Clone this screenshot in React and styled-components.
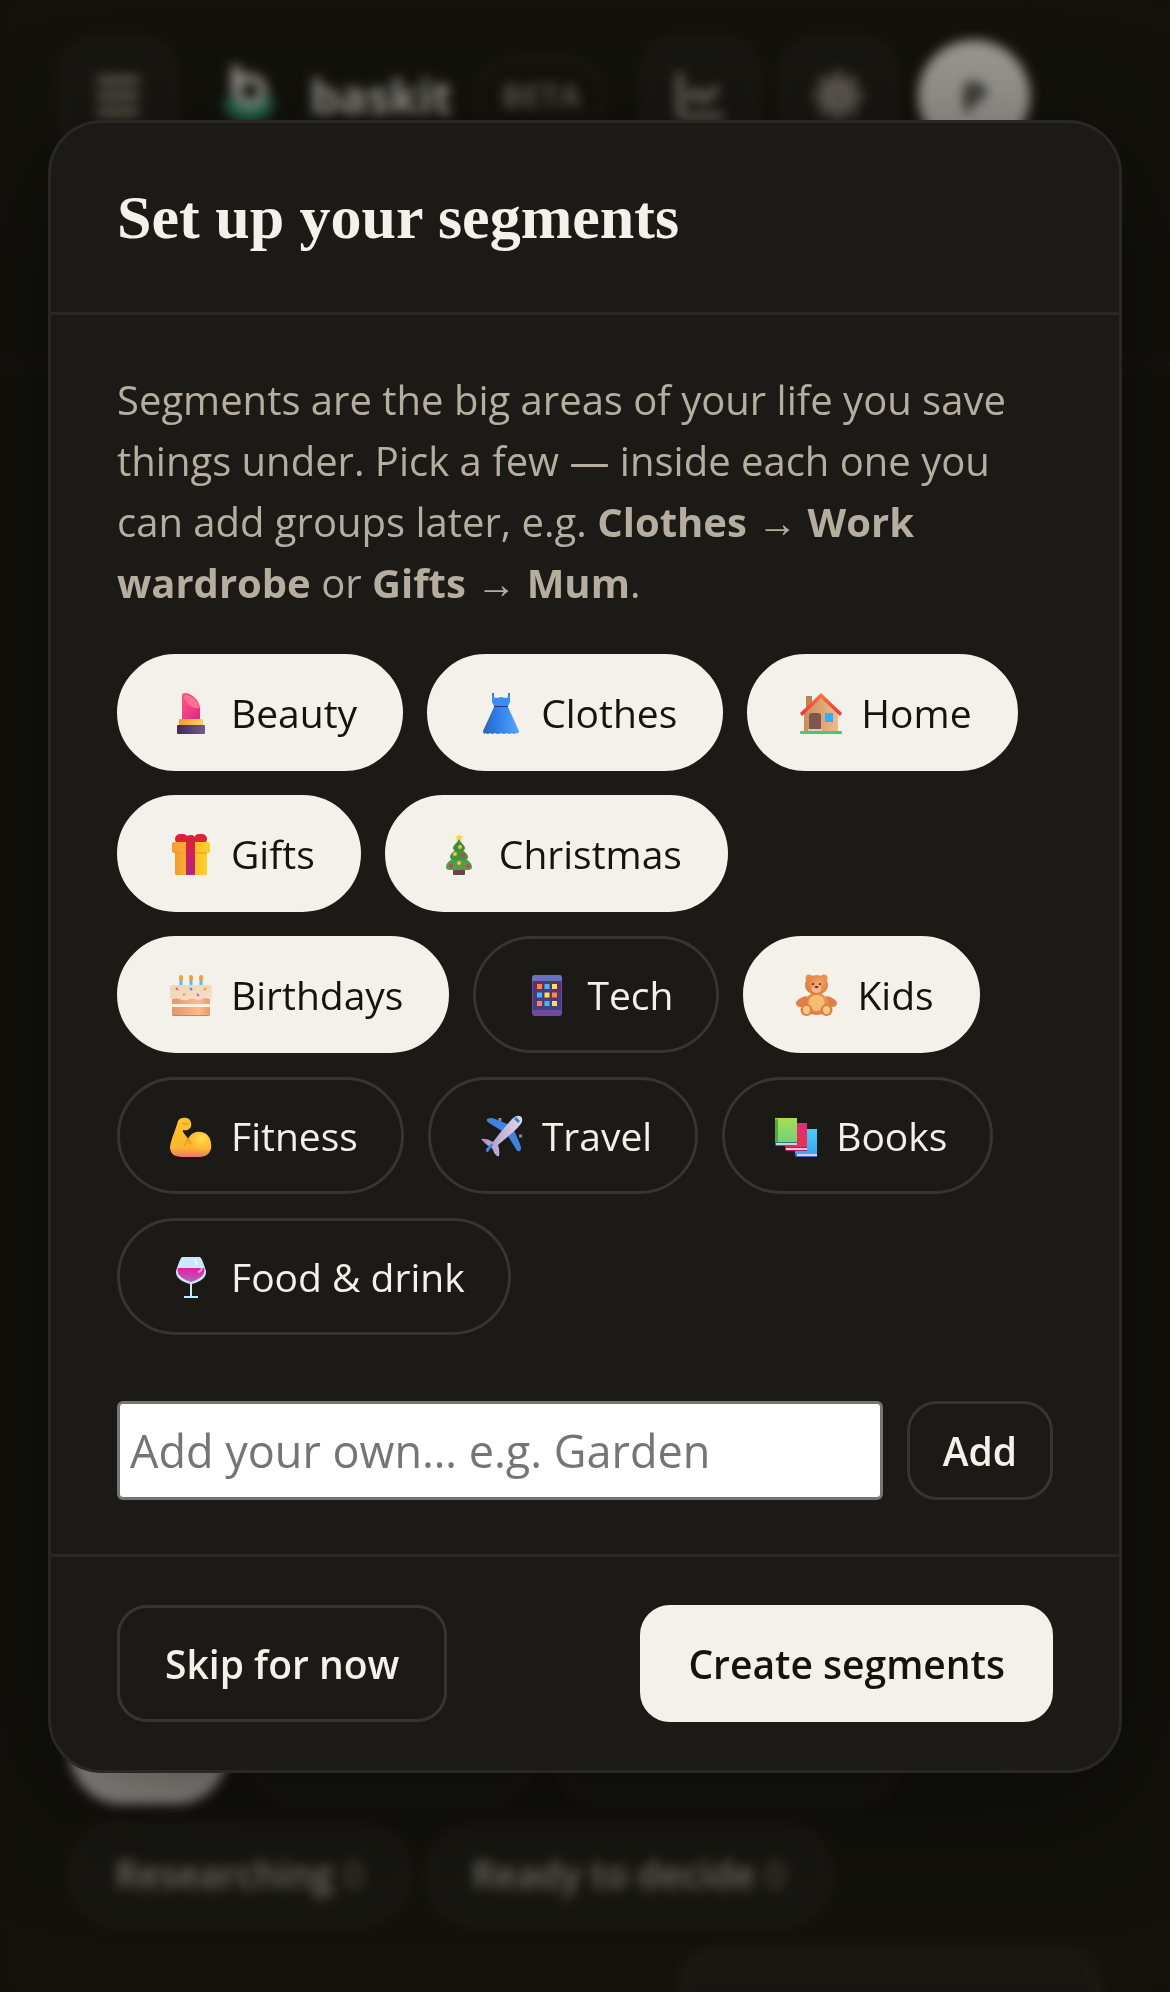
import React, { useState } from "react";
import styled, { createGlobalStyle } from "styled-components";
import { Menu, ChartLine, Sun } from "lucide-react";

const Lipstick = () => (
  <>
    <defs>
      <linearGradient id="lip" x1="0" y1="0" x2="1" y2="1">
        <stop offset="0" stopColor="#ff5a7d" />
        <stop offset="1" stopColor="#dd2590" />
      </linearGradient>
      <linearGradient id="lipBase">
        <stop offset="0" stopColor="#3c2a55" />
        <stop offset="1" stopColor="#75598f" />
      </linearGradient>
      <linearGradient id="lipGold">
        <stop offset="0" stopColor="#f59a35" />
        <stop offset="1" stopColor="#ffd257" />
      </linearGradient>
    </defs>
    <path d="M13 28V3q0-2 3-2c6 0 15 7 15 16v11z" fill="url(#lip)" />
    <path d="M15 3c7-1 15 6 15 13-7 2-15-6-15-13z" fill="#ff6f93" />
    <rect x="10" y="27" width="24" height="7" rx="1" fill="url(#lipGold)" />
    <rect x="8" y="33" width="28" height="9" rx="1" fill="url(#lipBase)" />
  </>
);

const Dress = () => (
  <>
    <defs>
      <linearGradient id="dress">
        <stop offset="0" stopColor="#2d63b4" />
        <stop offset="0.4" stopColor="#2f7fe6" />
        <stop offset="1" stopColor="#5aa2ff" />
      </linearGradient>
    </defs>
    <path d="M14 1v4M30 1v4" stroke="#3a7fd0" strokeWidth="2" />
    <path d="M13 4q2 0 3 2 3 0 6-1 3 1 6 1 1-2 3-2v6l-2 4H15l-2-4z" fill="#3a8cf8" />
    <path
      d="M15 15h14l11 24q0 3-3 2-2 2-4 0-3 2-5 0-3 2-6 0-3 2-6 0-3 2-5 0-3 2-4 0-3 2-3-2z"
      fill="url(#dress)"
    />
    <rect x="15" y="14" width="14" height="1" fill="#39306b" />
  </>
);

const House = () => (
  <>
    <defs>
      <linearGradient id="wall">
        <stop offset="0" stopColor="#c98e5d" />
        <stop offset="1" stopColor="#efbb8c" />
      </linearGradient>
      <linearGradient id="roof" x1="0" y1="0" x2="0" y2="1">
        <stop offset="0" stopColor="#ff7a3c" />
        <stop offset="1" stopColor="#e0353c" />
      </linearGradient>
    </defs>
    <rect x="7" y="4" width="6" height="13" fill="#b9854f" />
    <path d="M5 21 22 5l17 16v18H5z" fill="url(#wall)" />
    <path d="M1 21 22 1l21 20-2 3L22 6 3 24z" fill="url(#roof)" />
    <path d="M10 37V24q0-3 3-3h6q3 0 3 3v13z" fill="#80564f" />
    <rect x="9" y="37" width="14" height="2" fill="#d3cdd2" />
    <rect x="26" y="21" width="8" height="9" fill="#35acf5" />
    <rect x="1" y="39" width="42" height="3" rx="1" fill="#3fcb77" />
  </>
);

const Gift = () => (
  <>
    <defs>
      <linearGradient id="box">
        <stop offset="0" stopColor="#f69a35" />
        <stop offset="1" stopColor="#fbd326" />
      </linearGradient>
      <linearGradient id="ribbon" x1="0" y1="0" x2="0" y2="1">
        <stop offset="0" stopColor="#e01f38" />
        <stop offset="1" stopColor="#b3257f" />
      </linearGradient>
    </defs>
    <rect x="6" y="1" width="13" height="10" rx="5" fill="#de2236" />
    <rect x="25" y="1" width="13" height="10" rx="5" fill="#de2236" />
    <rect x="6" y="19" width="32" height="23" rx="1" fill="url(#box)" />
    <rect x="3" y="9" width="38" height="11" rx="2" fill="url(#box)" />
    <path d="M6 20h32" stroke="#e29a28" />
    <path d="M17 42V6q0-4 5-4 4 0 4 4v36z" fill="url(#ribbon)" />
  </>
);

const Tree = () => (
  <>
    <rect x="16" y="36" width="12" height="6" rx="1" fill="#6c4347" />
    <path d="M22 20c5 6 13 8 13 14q0 3-4 3H13q-4 0-4-3c0-6 8-8 13-14z" fill="#4f9e48" />
    <path d="M22 12c3 6 9 8 9 12 0 2-2 3-4 3H17c-2 0-4-1-4-3 0-4 6-6 9-12z" fill="#429540" />
    <path d="M22 5c1 5 6 7 6 10 0 2-2 3-3 3h-6c-1 0-3-1-3-3 0-3 5-5 6-10z" fill="#3a9038" />
    <path d="m22 1 1 2h3l-2 2 1 3-3-2-3 2 1-3-2-2h3z" fill="#ffcf3d" />
    <g fill="#f5c245">
      <circle cx="23" cy="14" r="2" />
      <circle cx="18" cy="21" r="2" />
      <circle cx="22" cy="30" r="2" />
    </g>
    <g fill="#d9365f">
      <circle cx="26" cy="22" r="2" />
      <circle cx="14" cy="33" r="2" />
      <circle cx="31" cy="33" r="2" />
    </g>
  </>
);

const Cake = () => (
  <>
    <defs>
      <linearGradient id="sponge">
        <stop offset="0" stopColor="#e1966d" />
        <stop offset="0.7" stopColor="#ffba86" />
        <stop offset="1" stopColor="#e89c70" />
      </linearGradient>
      <linearGradient id="icing" x1="0" y1="0" x2="1" y2="1">
        <stop offset="0" stopColor="#efd6ac" />
        <stop offset="1" stopColor="#f5ddd0" />
      </linearGradient>
    </defs>
    <rect x="3" y="22" width="38" height="20" rx="1" fill="url(#sponge)" />
    <rect x="3" y="30" width="38" height="3" fill="#ffeedd" />
    <rect x="4" y="41" width="36" height="1" fill="#d9708f" />
    <path
      d="M1 14q0-3 3-3h36q3 0 3 3v8q0 3-3 3-4-2-7 0-4 2-7 0-4-1-8 1-4 1-7-1-4-1-7 0-3 0-3-3z"
      fill="url(#icing)"
    />
    <path d="M12 5v6M22 5v6M32 5v6" stroke="#45c3e8" strokeWidth="3" />
    <g fill="#fb9b35">
      <ellipse cx="12" cy="4" rx="2" ry="3" />
      <ellipse cx="22" cy="4" rx="2" ry="3" />
      <ellipse cx="32" cy="4" rx="2" ry="3" />
    </g>
    <path d="m7 14 2 2m19 4 2 2" stroke="#d95db5" strokeWidth="2" />
    <path d="m21 14 2 2" stroke="#4b8ee8" strokeWidth="2" />
    <path d="m35 16 2-2M14 21l2-1" stroke="#f09a3a" strokeWidth="2" />
  </>
);

const dots = [
  ["#ff8744", "#35c1f6", "#ffdf4f"],
  ["#35c1f6", "#ffdf4f", "#ff8744"],
  ["#ff8744", "#35c1f6", "#ffdf4f"],
];

const Tablet = () => (
  <>
    <defs>
      <linearGradient id="screen" x1="0" y1="0" x2="0" y2="1">
        <stop offset="0" stopColor="#603066" />
        <stop offset="1" stopColor="#453f83" />
      </linearGradient>
    </defs>
    <rect x="7" y="1" width="30" height="41" rx="3" fill="#6f4a9f" />
    <path d="M7 7V4q0-3 3-3h24q3 0 3 3v3z" fill="#6970c0" />
    <rect x="8" y="7" width="28" height="29" fill="url(#screen)" />
    {dots.map((row, y) =>
      row.map((fill, x) => (
        <rect key={`${x}-${y}`} x={12 + x * 7.5} y={10 + y * 8.5} width="5" height="5" fill={fill} />
      ))
    )}
  </>
);

const Bear = () => (
  <>
    <defs>
      <radialGradient id="fur" cx="0.6" cy="0.4" r="0.7">
        <stop offset="0" stopColor="#f3a767" />
        <stop offset="1" stopColor="#d87438" />
      </radialGradient>
    </defs>
    <circle cx="14" cy="4" r="3.5" fill="#e39350" />
    <circle cx="29" cy="4" r="3.5" fill="#e39350" />
    <path d="M12 22C8 22 1 26 1 29c0 4 4 5 10 3zM31 22c4 0 11 4 11 7 0 4-4 5-10 3z" fill="#de8044" />
    <ellipse cx="21.5" cy="30" rx="12" ry="11" fill="url(#fur)" />
    <ellipse cx="21.5" cy="11" rx="11.5" ry="10" fill="url(#fur)" />
    <ellipse cx="21.5" cy="29" rx="8" ry="8" fill="#f7bd6e" />
    <ellipse cx="21.5" cy="15" rx="5" ry="4" fill="#f6b295" />
    <g fill="#3f2b3d">
      <circle cx="18" cy="10" r="1" />
      <circle cx="25" cy="10" r="1" />
      <ellipse cx="21.5" cy="13" rx="2" ry="1" />
    </g>
    <ellipse cx="11.5" cy="36" rx="6" ry="6" fill="#dd8046" />
    <ellipse cx="31.5" cy="36" rx="6" ry="6" fill="#dd8046" />
    <ellipse cx="11.5" cy="36" rx="3.5" ry="4" fill="#fac886" />
    <ellipse cx="31.5" cy="36" rx="3.5" ry="4" fill="#fac886" />
  </>
);

const Muscle = () => (
  <>
    <defs>
      <linearGradient id="arm" x1="0" y1="0" x2="0" y2="1">
        <stop offset="0" stopColor="#ffc52b" />
        <stop offset="0.75" stopColor="#fdb62d" />
        <stop offset="1" stopColor="#e8776a" />
      </linearGradient>
      <radialGradient id="biceps" cx="0.6" cy="0.3" r="0.7">
        <stop offset="0" stopColor="#ffe25a" />
        <stop offset="1" stopColor="#ffb52c" stopOpacity="0" />
      </radialGradient>
    </defs>
    <path
      d="M9 6c2-4 8-4 11-2 3 3 3 8 0 10-2 2-4 1-6 1-1 3 4 6 5 9 4-9 14-9 19-4 6 6 6 18-2 21-6 2-22 2-29 0-4-1-6-5-6-9C2 24 7 14 9 6z"
      fill="url(#arm)"
    />
    <circle cx="31" cy="28" r="11" fill="url(#biceps)" />
    <path d="M13 8q3 2 6 0M15 31l4-7 3 5" fill="none" stroke="#e89a20" strokeWidth="1.5" />
  </>
);

const Plane = () => (
  <>
    <defs>
      <linearGradient id="hull">
        <stop offset="0" stopColor="#a68fc4" />
        <stop offset="1" stopColor="#e3d7ec" />
      </linearGradient>
    </defs>
    <path d="M20 3v3M39 21h3" stroke="#8d8a99" strokeWidth="3" />
    <path d="M7 4q4-2 8 0l15 6-8 6L9 8q-3-2-2-4zM34 15l6 14q2 5 0 7-3 1-4-2l-8-13z" fill="#3f83dc" />
    <path d="M1 24q6-1 12 3 8-11 19-23 4-4 8-3 3 1 2 6-2 5-24 23 2 5 1 11-3 2-7-8-5-2-11-9z" fill="url(#hull)" />
    <path d="m6 34 6-6 1 2-5 7q-2 1-2-3z" fill="#3d83ea" />
    <path d="m35 3 4 4" stroke="#2c83d3" strokeWidth="3" />
  </>
);

const Books = () => (
  <>
    <defs>
      <linearGradient id="green" x1="0" y1="0" x2="0" y2="1">
        <stop offset="0" stopColor="#a7df4e" />
        <stop offset="1" stopColor="#6fce85" />
      </linearGradient>
      <linearGradient id="pink" x1="0" y1="0" x2="0" y2="1">
        <stop offset="0" stopColor="#e02c79" />
        <stop offset="1" stopColor="#e3344c" />
      </linearGradient>
      <linearGradient id="blue" x1="0" y1="0" x2="0" y2="1">
        <stop offset="0" stopColor="#51cbf8" />
        <stop offset="1" stopColor="#3fa4f0" />
      </linearGradient>
    </defs>
    <rect x="21" y="14" width="22" height="25" fill="url(#blue)" />
    <path d="M21 39h22v3H22q-1 0-1-3z" fill="#4469cf" />
    <path d="M23 40h20" stroke="#d9cdf0" strokeWidth="2" />
    <rect x="11" y="8" width="22" height="25" fill="url(#pink)" />
    <path d="M11 32h22v4H12q-1 0-1-4z" fill="#a92260" />
    <path d="M12 34h21" stroke="#ecc9e8" strokeWidth="2" />
    <rect x="1" y="3" width="22" height="26" fill="url(#green)" />
    <rect x="1" y="4" width="3" height="25" fill="#56a73d" />
    <path d="M1 27h22v4H2q-1 0-1-4z" fill="#238176" />
    <path d="M2 29h21" stroke="#d5c9ec" strokeWidth="2" />
  </>
);

const Wine = () => (
  <>
    <defs>
      <linearGradient id="wine" x1="0" y1="0" x2="0" y2="1">
        <stop offset="0" stopColor="#e81c9d" />
        <stop offset="1" stopColor="#b563bd" />
      </linearGradient>
    </defs>
    <path d="M13 1h18q2 1 6 14 1 9-14 13h-2Q6 24 7 15 11 2 13 1z" fill="#c9e9fb" />
    <path d="M9 12h26q3 9-13 14Q6 21 9 12z" fill="url(#wine)" />
    <path d="m26 3 2 6M29 16q4-1 4-4" stroke="#fff" strokeWidth="2" opacity="0.6" fill="none" />
    <path d="M22 27v14M15 41h14" stroke="#c9e9fb" strokeWidth="2" />
  </>
);

const SEGMENTS = [
  { name: "Beauty", Art: Lipstick, on: true },
  { name: "Clothes", Art: Dress, on: true },
  { name: "Home", Art: House, on: true },
  { name: "Gifts", Art: Gift, on: true },
  { name: "Christmas", Art: Tree, on: true },
  { name: "Birthdays", Art: Cake, on: true },
  { name: "Tech", Art: Tablet, on: false },
  { name: "Kids", Art: Bear, on: true },
  { name: "Fitness", Art: Muscle, on: false },
  { name: "Travel", Art: Plane, on: false },
  { name: "Books", Art: Books, on: false },
  { name: "Food & drink", Art: Wine, on: false },
];

function SegmentChip({ name, Art, on, onToggle }) {
  return (
    <Chip type="button" $on={on} aria-pressed={on} onClick={onToggle}>
      <svg width="54" height="42" viewBox="-6 0 54 42" aria-hidden="true">
        <Art />
      </svg>
      {name}
    </Chip>
  );
}

function Backdrop() {
  return (
    <Page aria-hidden="true" inert>
      <TopBar>
        <IconButton type="button">
          <Menu size={54} strokeWidth={3} />
        </IconButton>
        <Brand>
          <svg width="54" height="60" viewBox="0 0 54 60">
            <path d="M2 32h50q0 24-25 24T2 32z" fill="#2f9f7c" />
            <circle cx="28" cy="25" r="13" fill="none" stroke="#f4f1ea" strokeWidth="8" />
            <path d="M14 0v28" stroke="#f4f1ea" strokeWidth="9" />
          </svg>
          baskit
        </Brand>
        <Beta>BETA</Beta>
        <Tools>
          <IconButton type="button">
            <ChartLine size={54} strokeWidth={3} />
          </IconButton>
          <IconButton type="button">
            <Sun size={50} strokeWidth={4} />
          </IconButton>
          <Avatar>P</Avatar>
        </Tools>
      </TopBar>
      <Filters>
        <Filter $width={158} $on />
        <Filter $width={290} />
        <Filter $width={348} />
        <Filter>
          Researching <Count>0</Count>
        </Filter>
        <Filter>
          Ready to decide <Count>0</Count>
        </Filter>
      </Filters>
      <Sheet />
    </Page>
  );
}

export default function App() {
  const [segments, setSegments] = useState(SEGMENTS);
  const [custom, setCustom] = useState("");

  const toggle = (name) =>
    setSegments(segments.map((s) => (s.name === name ? { ...s, on: !s.on } : s)));

  return (
    <>
      <GlobalStyle />
      <Backdrop />
      <Overlay>
        <Modal role="dialog" aria-modal="true" aria-labelledby="segments-title">
          <ModalHeader>
            <Title id="segments-title">Set up your segments</Title>
          </ModalHeader>
          <ModalBody>
            <Intro>
              Segments are the big areas of your life you save things under. Pick a few — inside
              each one you can add groups later, e.g. <b>Clothes</b> → <b>Work wardrobe</b> or{" "}
              <b>Gifts</b> → <b>Mum</b>.
            </Intro>
            <Chips>
              {segments.map((s) => (
                <SegmentChip key={s.name} {...s} onToggle={() => toggle(s.name)} />
              ))}
            </Chips>
            <AddRow>
              <AddInput
                type="text"
                aria-label="Add your own segment"
                placeholder="Add your own… e.g. Garden"
                value={custom}
                onChange={(e) => setCustom(e.target.value)}
              />
              <Button type="button" $small>
                Add
              </Button>
            </AddRow>
          </ModalBody>
          <ModalFooter>
            <Button type="button">Skip for now</Button>
            <Button type="button" $primary>
              Create segments
            </Button>
          </ModalFooter>
        </Modal>
      </Overlay>
    </>
  );
}

const GlobalStyle = createGlobalStyle`
  * {
    box-sizing: border-box;
  }
  body {
    margin: 0;
    background: #16150f;
    color: #f4f1ea;
    font-family: "Open Sans", "Noto Sans", sans-serif;
  }
  button,
  input {
    font-family: inherit;
  }
`;

const Page = styled.div`
  display: flex;
  flex-direction: column;
  height: 100vh;
  overflow: hidden;
`;

const TopBar = styled.header`
  display: flex;
  align-items: flex-start;
  height: 366px;
  padding: 38px 60px;
  border-bottom: 3px solid #24221d;
`;

const IconButton = styled.button`
  display: flex;
  align-items: center;
  justify-content: center;
  width: 116px;
  height: 116px;
  padding: 0;
  border: 3px solid #332b24;
  border-radius: 36px;
  background: #1e1d18;
  color: #b5ada0;
`;

const Brand = styled.div`
  display: flex;
  align-items: center;
  gap: 34px;
  height: 116px;
  margin-left: 46px;
  font-size: 46px;
  font-weight: 700;
`;

const Beta = styled.span`
  margin: 22px 0 0 24px;
  padding: 0 22px;
  border: 3px solid #332b24;
  border-radius: 36px;
  color: #8f877a;
  font-size: 32px;
  font-weight: 700;
  line-height: 66px;
`;

const Tools = styled.div`
  display: flex;
  gap: 22px;
  margin: 0 80px 0 auto;
`;

const Avatar = styled.span`
  width: 112px;
  height: 112px;
  margin-top: 2px;
  border-radius: 50%;
  background: #f4f1ea;
  color: #14130f;
  font-size: 40px;
  font-weight: 700;
  line-height: 112px;
  text-align: center;
`;

const Filters = styled.div`
  display: flex;
  flex-wrap: wrap;
  gap: 18px;
  margin-top: auto;
  padding: 0 70px;
`;

const Filter = styled.span`
  width: ${({ $width }) => ($width ? `${$width}px` : "auto")};
  height: 104px;
  padding: 0 42px;
  border: 3px solid ${({ $on }) => ($on ? "#f4f1ea" : "#332b24")};
  border-radius: 52px;
  background: ${({ $on }) => ($on ? "#f4f1ea" : "#1e1d18")};
  color: #b5ada0;
  font-size: 37px;
  font-weight: 600;
  line-height: 98px;
`;

const Count = styled.span`
  opacity: 0.5;
`;

const Sheet = styled.div`
  align-self: flex-end;
  width: 420px;
  height: 42px;
  margin: 24px 70px 0 0;
  border: 3px solid #332b24;
  border-bottom: 0;
  border-radius: 36px 36px 0 0;
  background: #1e1d18;
`;

const Overlay = styled.div`
  position: fixed;
  inset: 0;
  overflow: auto;
  padding: 120px 48px;
  background: rgba(16, 15, 11, 0.4);
  backdrop-filter: blur(6px);
`;

const Modal = styled.div`
  border: 3px solid #292824;
  border-radius: 54px;
  background: #1b1a16;
  box-shadow: 0 30px 120px rgba(0, 0, 0, 0.5);
`;

const ModalHeader = styled.div`
  padding: 54px 66px;
  border-bottom: 3px solid #292824;
`;

const Title = styled.h2`
  margin: 0;
  font-family: "Liberation Serif", serif;
  font-size: 62px;
  font-weight: 700;
  line-height: 81px;
`;

const ModalBody = styled.div`
  padding: 54px 66px;
`;

const Intro = styled.p`
  margin: 0 0 41px;
  color: #b5ada0;
  font-size: 40px;
  line-height: 61px;
`;

const Chips = styled.div`
  display: flex;
  flex-wrap: wrap;
  gap: 24px;
`;

const Chip = styled.button`
  display: flex;
  align-items: center;
  gap: 14px;
  height: 117px;
  padding: 0 43px;
  border: 3px solid ${({ $on }) => ($on ? "#f4f1ea" : "#3a342e")};
  border-radius: 60px;
  background: ${({ $on }) => ($on ? "#f4f1ea" : "transparent")};
  color: ${({ $on }) => ($on ? "#14130f" : "#f4f1ea")};
  font-size: 39px;
  cursor: pointer;
`;

const AddRow = styled.div`
  display: flex;
  gap: 24px;
  margin-top: 66px;
`;

const AddInput = styled.input`
  flex: 1;
  min-width: 0;
  height: 99px;
  padding: 3px 10px;
  border: 3px solid #767676;
  border-radius: 6px;
  background: #fff;
  color: #14130f;
  font-size: 45px;

  &::placeholder {
    color: #757575;
    opacity: 1;
  }
`;

const Button = styled.button`
  height: ${({ $small }) => ($small ? "99px" : "117px")};
  padding: 0 ${({ $small }) => ($small ? "33px" : "45px")};
  border: 3px solid ${({ $primary }) => ($primary ? "#f4f1ea" : "#3a342e")};
  border-radius: 30px;
  background: ${({ $primary }) => ($primary ? "#f4f1ea" : "transparent")};
  color: ${({ $primary }) => ($primary ? "#14130f" : "#f4f1ea")};
  font-size: 39px;
  font-weight: 600;
  cursor: pointer;
`;

const ModalFooter = styled.div`
  display: flex;
  justify-content: space-between;
  padding: 48px 66px;
  border-top: 3px solid #292824;
`;
